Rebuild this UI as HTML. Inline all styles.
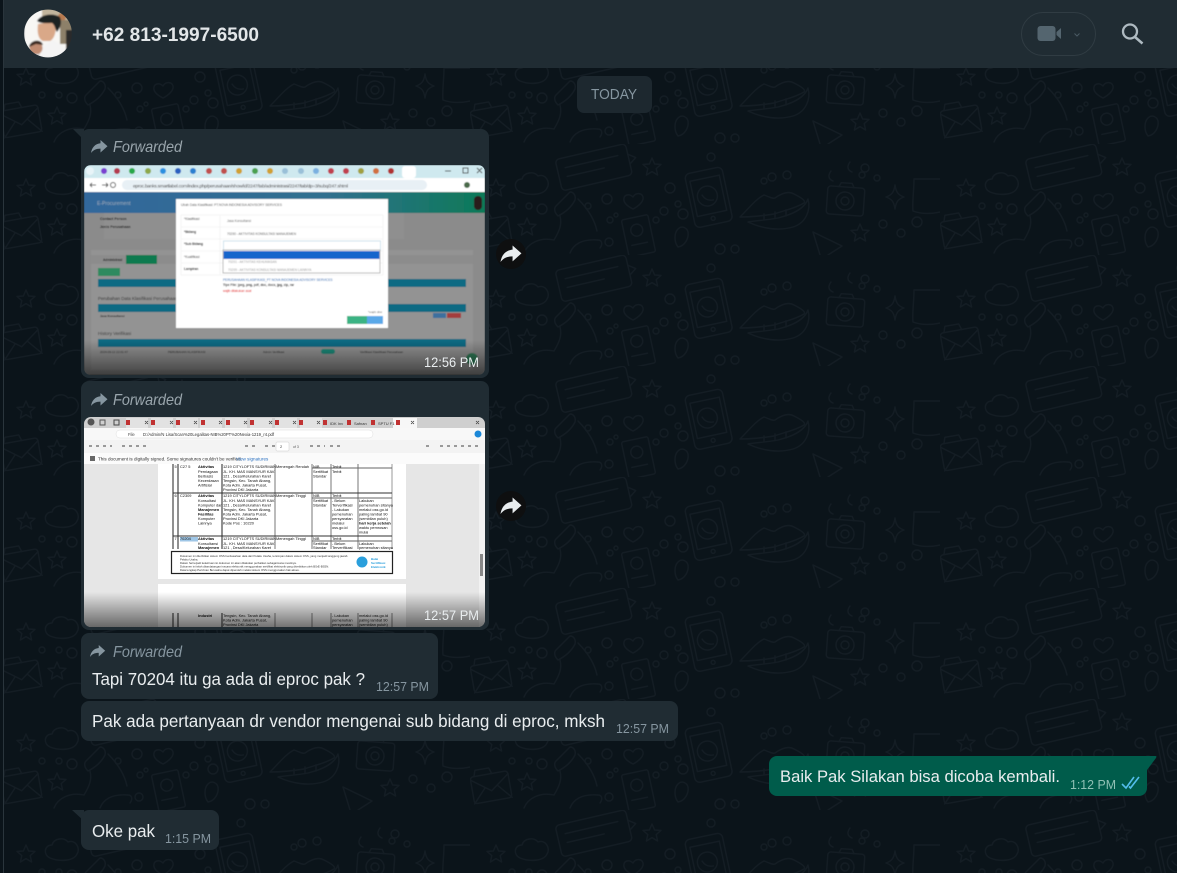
<!DOCTYPE html>
<html><head><meta charset="utf-8"><title>Chat</title>
<style>
html,body{margin:0;padding:0;background:#0b141a;width:1177px;height:873px;overflow:hidden}
svg{display:block;position:absolute;left:0;top:0}
text{font-family:"Liberation Sans",sans-serif}
</style></head><body>
<svg width="1177" height="873" viewBox="0 0 1177 873" xmlns="http://www.w3.org/2000/svg">
<defs>
<path id="star" d="M0-9 2.6-3 9-2.6 4.2 1.6 5.6 8 0 4.6-5.6 8-4.2 1.6-9-2.6-2.6-3Z"/>
<path id="fw" d="M9.500 0 16.500 6.200 9.500 12.500V8.600C5 8.600 2.200 10 0 13 .8 7.500 4 3.800 9.500 3.200Z"/>
<pattern id="doodle" patternUnits="userSpaceOnUse" x="0" y="33" width="470" height="111">
<g fill="none" stroke="#141d24" stroke-width="1.400" stroke-linecap="round" stroke-linejoin="round">
<g transform="rotate(-13 125 24)"><rect x="88" y="7" width="72" height="32" rx="4"/><path d="M96 17H150M96 26H134M160 18l7 5-7 5"/></g>
<use href="#star" x="182" y="23"/>
<path d="M50 48c-7-3-6-13 2-13 2-7 12-8 16-3 7-3 13 6 9 12-3 7-17 8-27 4Z"/>
<g transform="rotate(-12 238 55)"><rect x="220" y="26" width="38" height="55" rx="5"/><rect x="224" y="34" width="30" height="36"/><circle cx="238" cy="52" r="10"/><path d="M233 50c2 5 6 7 10 7"/><circle cx="239" cy="75" r="2"/></g>
<path d="M270 73c10-10 16-18 24-22 6 2 8 4 11 3 7-5 14-7 19-4 8 4 12 7 10 9-10 6-22 8-30 11-12 2-24 3-34 3ZM278 78c4-1 20-2 30-4 12-3 26-8 30-19 3 11-2 24-15 28-14 4-30 2-45-5Z"/>
<path d="M294 70v5M305 68v6M316 66v6"/>
<g transform="rotate(4 375 57)"><rect x="357" y="43" width="37" height="28" rx="3"/><circle cx="375" cy="57" r="9"/><circle cx="375" cy="57" r="4"/><path d="M368 43l2-4h11l2 4"/></g>
<path d="M425 41c1 7 3 10 9 12-6 2-8 5-9 12-1-7-3-10-9-12 6-2 8-5 9-12Z"/>
<path d="M444 35h26M444 35c0 12-2 24-1 32 8 3 18 3 27 1" />
<use href="#star" x="26" y="44"/>
<g transform="rotate(-10 20 88)"><rect x="2" y="75" width="38" height="27" rx="3"/><path d="M2 78 21 92 40 78M2 102 15 88M40 102 28 88"/><path d="M6 75l2-6H22l2 6"/></g>
<path d="M163 65c-6-3-10-7-9-11 1-4 6-4 9-1 3-5 9-4 10 0 1 4-4 9-10 12Z"/>
<path d="M54 109c4-10 16-16 30-13 6-10 8-16 6-24M88 72c-4-4-4-8-2-10l14-14c4 0 6 4 5 8-3 6-9 12-17 16ZM108 55c8 8 16 18 19 32M100 109c4-10 14-14 28-13 4 0 5 4 2 8"/>
<g transform="rotate(-12 168 92)"><rect x="155" y="73" width="27" height="38" rx="2"/><circle cx="168" cy="86" r="6"/><path d="M160 100H176"/></g>
<path d="M208 103c-4-5-4-14 0-18 4-4 9-1 10 3 1 6-3 14-10 15Z"/>
<use href="#star" x="57" y="83"/><use href="#star" x="390" y="89"/>
<path d="M343 88 372 102 358 111M343 88 350 111"/>
<path d="M361 27c-3 4-3 8 2 10M380 18c-3 4-3 8 2 10"/>
<circle cx="213" cy="70" r="5"/><circle cx="200" cy="44" r="5"/><circle cx="250" cy="105" r="5"/><circle cx="265" cy="105" r="4"/><circle cx="137" cy="55" r="5"/><circle cx="72" cy="65" r="5"/><circle cx="118" cy="62" r="3"/><circle cx="42" cy="62" r="3"/><circle cx="59" cy="62" r="3"/><circle cx="194" cy="67" r="4"/><circle cx="186" cy="76" r="3"/><circle cx="208" cy="60" r="3"/><circle cx="302" cy="33" r="4"/><circle cx="317" cy="31" r="4"/><circle cx="294" cy="37" r="3"/><circle cx="413" cy="80" r="4"/><circle cx="447" cy="78" r="5"/><circle cx="431" cy="89" r="4"/><circle cx="407" cy="34" r="3"/><circle cx="392" cy="31" r="3"/><circle cx="140" cy="76" r="3"/><circle cx="146" cy="71" r="2"/><circle cx="139" cy="98" r="4"/><circle cx="395" cy="24" r="4"/><circle cx="241" cy="13" r="4"/>
</g></pattern>
<clipPath id="av"><circle cx="48" cy="33.500" r="24"/></clipPath>
<clipPath id="im1"><rect x="84" y="165" width="401" height="210" rx="7"/></clipPath>
<clipPath id="im2"><rect x="84" y="417" width="401" height="210" rx="7"/></clipPath>
<linearGradient id="shade" x1="0" y1="0" x2="0" y2="1"><stop offset="0" stop-color="#000" stop-opacity="0"/><stop offset="1" stop-color="#000" stop-opacity=".55"/></linearGradient>
<linearGradient id="appbar" x1="0" y1="0" x2="1" y2="0"><stop offset="0" stop-color="#31679c"/><stop offset=".6" stop-color="#31708f"/><stop offset="1" stop-color="#0d7a58"/></linearGradient>
<filter id="b1" x="-5%" y="-5%" width="110%" height="110%"><feGaussianBlur stdDeviation=".6"/></filter>
<filter id="b3" x="-5%" y="-5%" width="110%" height="110%"><feGaussianBlur stdDeviation=".35"/></filter>
<filter id="b2" x="-5%" y="-5%" width="110%" height="110%"><feGaussianBlur stdDeviation=".8"/></filter>
</defs>

<!-- wallpaper -->
<rect width="1177" height="873" fill="#0b141a"/>
<rect width="1177" height="873" fill="url(#doodle)"/>

<!-- header -->
<rect x="4" y="0" width="1173" height="68" fill="#202c33"/>
<rect x="0" y="0" width="3" height="873" fill="#0b141a"/>
<rect x="3" y="0" width="1" height="873" fill="#2a353c"/>
<g clip-path="url(#av)"><g filter="url(#b2)">
<rect x="24" y="9" width="48" height="49" fill="#f8f7f4"/>
<rect x="42" y="9" width="30" height="14" fill="#c2b59d"/>
<circle cx="62" cy="17" r="4" fill="#b87a50"/>
<rect x="60" y="20" width="12" height="24" fill="#8d8069"/>
<rect x="66" y="30" width="6" height="28" fill="#2b2a2a"/>
<path d="M38 24c-1 8 0 15 5 17h7c4-2 6-8 6-15l-4-4Z" fill="#d9a888"/>
<path d="M37 21c3-6 15-9 23-4 2 5 1 10-3 15-2-3-2-7-5-9-5 0-11 1-15-2Z" fill="#1f2024"/>
<path d="M42 47l11-7 10 6 6 12H41Z" fill="#f4f4f4"/>
<circle cx="36" cy="48" r="6.500" fill="#c08c72"/><path d="M29 47c1-7 12-9 14-2l-7-1Z" fill="#3a2c24"/>
<rect x="26" y="54" width="14" height="5" fill="#d8d8d8"/>
</g></g>
<text x="92" y="41" fill="#e2e6e8" font-size="19.500" font-weight="700" textLength="167" lengthAdjust="spacingAndGlyphs">+62 813-1997-6500</text>
<rect x="1021.500" y="12.500" width="74" height="43" rx="21.500" fill="none" stroke="#303c43"/>
<rect x="1037.500" y="26" width="18" height="15" rx="3" fill="#54656f"/>
<path d="M1061 28 1056.500 32V35L1061 39Z" fill="#54656f"/>
<path d="M1074.500 33.500l2.500 2.500 2.500-2.500" fill="none" stroke="#4a5a63" stroke-width="1"/>
<circle cx="1130" cy="31.500" r="7" fill="none" stroke="#aebac1" stroke-width="2.300"/>
<path d="M1135 37l7.500 6.500" stroke="#aebac1" stroke-width="2.500" fill="none"/>

<!-- today -->
<rect x="577" y="76" width="75" height="37" rx="7" fill="#1d282f"/>
<text x="591" y="99" fill="#8696a0" font-size="15" textLength="46" lengthAdjust="spacingAndGlyphs">TODAY</text>

<!-- bubble 1 -->
<path d="M73 129H84V140Z" fill="#202c33"/>
<rect x="81" y="129" width="408" height="249" rx="8" fill="#202c33"/>
<use href="#fw" x="91" y="140" fill="#8696a0"/>
<text x="113" y="152" fill="#9aa6ad" font-size="16" font-style="italic" textLength="69" lengthAdjust="spacingAndGlyphs">Forwarded</text>
<g clip-path="url(#im1)">
<g filter="url(#b1)">
<rect x="84" y="165" width="401" height="210" fill="#8b8b8b"/>
<rect x="84" y="165" width="401" height="13" fill="#cfe9ef"/>
<circle cx="90" cy="171" r="4" fill="#e8f4f8"/>
<g><circle cx="104" cy="171" r="3" fill="#7a3fd0"/><circle cx="117" cy="171" r="3" fill="#b33b50"/><circle cx="132" cy="171" r="3" fill="#28a84a"/><circle cx="148" cy="171" r="3" fill="#8da84a"/><circle cx="163" cy="171" r="3" fill="#2a90e0"/><circle cx="178" cy="171" r="3" fill="#2a60c0"/><circle cx="193" cy="171" r="3" fill="#2a80d0"/><circle cx="209" cy="171" r="3" fill="#c0504d"/><circle cx="224" cy="171" r="3" fill="#c0504d"/><circle cx="239" cy="171" r="3" fill="#d0a030"/><circle cx="255" cy="171" r="3" fill="#4aa050"/><circle cx="270" cy="171" r="3" fill="#d0a030"/><circle cx="285" cy="171" r="3" fill="#9ac0d8"/><circle cx="301" cy="171" r="3" fill="#9ac0d8"/><circle cx="316" cy="171" r="3" fill="#7ab0e0"/><circle cx="331" cy="171" r="3" fill="#c04050"/><circle cx="346" cy="171" r="3" fill="#c04050"/><circle cx="361" cy="171" r="3" fill="#a0a040"/><circle cx="376" cy="171" r="3" fill="#d07040"/><circle cx="391" cy="171" r="3" fill="#b03030"/></g>
<rect x="402" y="166" width="14" height="12" rx="3" fill="#fff"/>
<path d="M445 171H451M463 168h5v5h-5ZM477 168l5 5M482 168l-5 5" stroke="#444" stroke-width="1" fill="none"/>
<rect x="84" y="178" width="401" height="14" fill="#fff"/>
<path d="M90 185H96M90 185l2-2M90 185l2 2M102 185H108M108 185l-2-2M108 185l-2 2" stroke="#555" stroke-width="1" fill="none"/>
<circle cx="113" cy="185" r="2.500" fill="none" stroke="#555"/>
<rect x="122" y="180" width="305" height="10" rx="5" fill="#e8f0f5"/>
<text x="133" y="187.500" font-size="4.800" fill="#444" textLength="215">eproc.banks.smartlabel.com/index.php/perusahaan/show/id/2247/tab/administrasi/2247/tab/dp=3/subq/247.shtml</text>
<circle cx="467" cy="185" r="3" fill="#4a6a4a"/>
<rect x="84" y="192" width="401" height="21" fill="url(#appbar)"/>
<text x="97" y="205" font-size="5" fill="#9ab">E-Procurement</text>
<rect x="474" y="196" width="8" height="14" rx="4" fill="#2a1a1a"/>
<rect x="104" y="213" width="300" height="26" fill="#8f8f8f"/>
<text x="100" y="220" font-size="3.600" font-weight="700" fill="#222">Contact Person</text>
<text x="100" y="228" font-size="3.600" font-weight="700" fill="#222">Jenis Perusahaan</text>
<rect x="91" y="250" width="382" height="120" fill="#939393"/>
<rect x="91" y="255" width="382" height="9" fill="#8c8c8c"/>
<text x="103" y="261" font-size="3.200" font-weight="700" fill="#222">Administrasi</text>
<rect x="126" y="255" width="31" height="9" fill="#0b7a50"/>
<rect x="98" y="268" width="22" height="8" fill="#2f8a5e"/>
<rect x="98" y="279" width="368" height="8" fill="#076b83"/>
<text x="98" y="300" font-size="4.500" fill="#333">Perubahan Data Klasifikasi Perusahaan</text>
<rect x="98" y="304" width="368" height="8" fill="#076b83"/>
<text x="100" y="317" font-size="3" font-weight="700" fill="#222">Jasa Konsultansi</text>
<rect x="433" y="313" width="13" height="5" fill="#3d6f9e"/><rect x="447" y="313" width="14" height="5" fill="#a33e3e"/>
<text x="98" y="335" font-size="4.500" fill="#333">History Verifikasi</text>
<rect x="98" y="339" width="368" height="8" fill="#076b83"/>
<text x="100" y="353" font-size="3" fill="#222">2024-09-12 22:01:47</text>
<text x="168" y="353" font-size="3" fill="#222">PERUBAHAN KLASIFIKASI</text>
<text x="263" y="353" font-size="3" fill="#222">Admin Verifikasi</text>
<rect x="321" y="349" width="14" height="5" rx="2.500" fill="#1a8a7a"/>
<text x="360" y="353" font-size="3" fill="#222">Verifikasi Klasifikasi Perusahaan</text>
<circle cx="472" cy="359" r="6" fill="#2f7a56"/>
<!-- modal -->
<rect x="176" y="199" width="212" height="129" fill="#fff"/>
<text x="181" y="206" font-size="3.300" fill="#555">Ubah Data Klasifikasi: PT.NOVA INDONESIA ADVISORY SERVICES</text>
<rect x="181" y="215" width="202" height="60" fill="none" stroke="#eee" stroke-width=".6"/>
<path d="M181 227H383M181 239H383M181 251H383M181 263H383M220 215V275" stroke="#eee" stroke-width=".6"/>
<text x="184" y="220" font-size="3.200" fill="#444">*Klasifikasi</text><text x="184" y="233" font-size="3.200" font-weight="700" fill="#222">*Bidang</text><text x="184" y="245" font-size="3.200" font-weight="700" fill="#222">*Sub Bidang</text><text x="184" y="258" font-size="3.200" fill="#444">*Kualifikasi</text><text x="184" y="270" font-size="3.200" font-weight="700" fill="#222">Lampiran</text>
<text x="227" y="222" font-size="3.200" fill="#666">Jasa Konsultansi</text>
<text x="227" y="235" font-size="3.200" fill="#555">70200 - AKTIVITAS KONSULTASI MANAJEMEN</text>
<rect x="223.500" y="241" width="157" height="9" fill="#fff" stroke="#bcd8e6" stroke-width=".7"/>
<rect x="223" y="250" width="157" height="23" fill="#fff" stroke="#aaa" stroke-width=".8"/>
<rect x="223.500" y="251" width="156" height="8" fill="#1565cc"/>
<text x="228" y="263" font-size="3.200" fill="#999">70201 - AKTIVITAS KEHUMASAN</text>
<text x="228" y="271" font-size="3.200" fill="#999">70209 - AKTIVITAS KONSULTASI MANAJEMEN LAINNYA</text>
<text x="223" y="281" font-size="3.200" fill="#2a68b0">PERUSAHAAN KLASIFIKASI_PT NOVA INDONESIA ADVISORY SERVICES</text>
<text x="223" y="286" font-size="3.200" font-weight="700" fill="#222">Tipe File: jpeg, png, pdf, doc, docx, jpg, zip, rar</text>
<text x="223" y="292" font-size="3.200" fill="#e02020">wajib dilakukan asal</text>
<text x="368" y="313" font-size="3" fill="#666">*wajib diisi</text>
<rect x="347" y="316" width="20" height="8" fill="#3bb384"/><rect x="367" y="316" width="16" height="8" fill="#5aa8e8"/>
</g>
<rect x="84" y="340" width="401" height="35" fill="url(#shade)"/>
</g>
<text x="424" y="367" fill="#e9edef" font-size="13.500" textLength="55" lengthAdjust="spacingAndGlyphs">12:56 PM</text>
<circle cx="511" cy="254" r="15" fill="#0e0f10"/>
<use href="#fw" transform="translate(500.500 245.500) scale(1.270)" fill="#e9edef"/>

<!-- bubble 2 -->
<rect x="81" y="381" width="408" height="249" rx="8" fill="#202c33"/>
<use href="#fw" x="91" y="393" fill="#8696a0"/>
<text x="113" y="405" fill="#9aa6ad" font-size="16" font-style="italic" textLength="69" lengthAdjust="spacingAndGlyphs">Forwarded</text>
<g clip-path="url(#im2)">
<g filter="url(#b3)">
<rect x="84" y="417" width="401" height="210" fill="#e6e6e6"/>
<rect x="84" y="417" width="401" height="11" fill="#cfcfcf"/>
<circle cx="91" cy="422" r="3.500" fill="#555"/>
<rect x="100" y="420" width="5" height="5" fill="none" stroke="#555"/><rect x="114" y="420" width="5" height="5" fill="none" stroke="#444"/>
<g fill="#e2e2e2"><rect x="126" y="418" width="22" height="10"/><rect x="151" y="418" width="22" height="10"/><rect x="176" y="418" width="22" height="10"/><rect x="200" y="418" width="22" height="10"/><rect x="225" y="418" width="22" height="10"/><rect x="250" y="418" width="22" height="10"/><rect x="275" y="418" width="22" height="10"/><rect x="300" y="418" width="22" height="10"/></g>
<rect x="393" y="418" width="24" height="10" fill="#f7f7f7"/>
<g fill="#c03030"><rect x="126" y="420" width="4" height="5"/><rect x="151" y="420" width="4" height="5"/><rect x="176" y="420" width="4" height="5"/><rect x="201" y="420" width="4" height="5"/><rect x="226" y="420" width="4" height="5"/><rect x="250" y="420" width="4" height="5"/><rect x="275" y="420" width="4" height="5"/><rect x="299" y="420" width="4" height="5"/><rect x="323" y="420" width="4" height="5"/><rect x="347" y="420" width="4" height="5"/><rect x="371" y="420" width="4" height="5"/><rect x="396" y="420" width="4" height="5"/></g>
<path d="M145 421l3 3M148 421l-3 3M170 421l3 3M173 421l-3 3M194 421l3 3M197 421l-3 3M219 421l3 3M222 421l-3 3M244 421l3 3M247 421l-3 3M269 421l3 3M272 421l-3 3M293 421l3 3M296 421l-3 3M317 421l3 3M320 421l-3 3M411 421l3 3M414 421l-3 3M476 421l3 3M479 421l-3 3" stroke="#333" stroke-width=".7"/>
<text x="330" y="425" font-size="4" fill="#333">IDK Inv</text><text x="354" y="425" font-size="4" fill="#333">Safnan</text><text x="378" y="425" font-size="4" fill="#333">SPTU F1</text>
<rect x="84" y="428" width="401" height="12" fill="#f8f8f8"/>
<rect x="116" y="430" width="257" height="8" rx="4" fill="#fff" stroke="#ddd" stroke-width=".5"/>
<text x="128" y="436" font-size="4.200" fill="#444">File</text>
<text x="143" y="436" font-size="4.200" fill="#333">D:/Admin/N Lisa/Scan%20Legalitas-NIB%20PT%20Nexia-1219_r4.pdf</text>
<circle cx="478" cy="434" r="3.500" fill="#1e88d8"/>
<rect x="84" y="440" width="401" height="13" fill="#f3f3f3"/>
<rect x="276" y="442" width="13" height="9" rx="1" fill="#fff" stroke="#ccc" stroke-width=".5"/>
<text x="280" y="448" font-size="4" fill="#444">2</text>
<text x="293" y="448" font-size="3.500" fill="#555">of 3</text>
<path d="M89 446H112M122 446H150M245 446H255M265 446H275M310 446H325M330 446H340M426 446H432M440 446H478" stroke="#999" stroke-width="2" stroke-dasharray="3 4"/>
<rect x="84" y="453" width="401" height="11" fill="#fbfbfb"/>
<rect x="90" y="456" width="5" height="5" fill="#666"/>
<text x="98" y="460.500" font-size="4.600" fill="#333">This document is digitally signed. Some signatures couldn't be verified.</text>
<text x="236" y="460.500" font-size="4.600" fill="#2a70c0">View signatures</text>
<rect x="158" y="464" width="248" height="115" fill="#fff"/>
<rect x="158" y="584" width="248" height="43" fill="#fff"/>
<rect x="479" y="464" width="6" height="163" fill="#f2f2f2"/><rect x="480" y="554" width="3" height="22" fill="#888"/>
<g stroke="#222" stroke-width="1" fill="none">
<path d="M173 464V549M178 464V549M222 464V549"/>
<path d="M275 464V549M312 464V549" stroke="#777"/>
<path d="M331 464V549M358 464V549" stroke="#777"/>
<path d="M392 464V549" stroke="#999"/>
<path d="M173 493H392M173 536H392" stroke="#333"/>
<path d="M312 468H392M312 498H392M312 541H392" stroke="#666"/>
<rect x="171.500" y="551.500" width="221" height="22" stroke-width="1.200"/>
</g>
<rect x="180" y="537" width="18" height="4.500" fill="#9fc6e6"/>
<g font-size="3.900" fill="#111">
<text x="174.500" y="468">5</text><text x="180" y="468">C27 5</text>
<text x="198" y="468" font-weight="700">Aktivitas</text><text x="198" y="473">Perniagaan</text><text x="198" y="477.500">Berbasis</text><text x="198" y="482">Kecerdasan</text><text x="198" y="486.500">Artifisial</text>
<text x="223" y="468">1219 CITYLOFTS SUDIRMAN</text><text x="223" y="473">JL. KH. MAS MANSYUR KAV.</text><text x="223" y="477.500">121 , Desa/Kelurahan Karet</text><text x="223" y="482">Tengsin, Kec. Tanah Abang,</text><text x="223" y="486.500">Kota Adm. Jakarta Pusat,</text><text x="223" y="491">Provinsi DKI Jakarta</text>
<text x="276" y="468">Menengah Rendah</text><text x="313" y="468">NIB</text><text x="313" y="473">Sertifikat</text><text x="313" y="477.500">Standar</text><text x="332" y="468">Terbit</text><text x="332" y="473">Terbit</text>
<text x="174.500" y="497">6</text><text x="180" y="497">C2309</text>
<text x="198" y="497" font-weight="700">Aktivitas</text><text x="198" y="502">Konsultasi</text><text x="198" y="506.500">Komputer dan</text><text x="198" y="511" font-weight="700">Manajemen</text><text x="198" y="515.500" font-weight="700">Fasilitas</text><text x="198" y="520">Komputer</text><text x="198" y="524.500">Lainnya</text>
<text x="223" y="497">1219 CITYLOFTS SUDIRMAN</text><text x="223" y="502">JL. KH. MAS MANSYUR KAV.</text><text x="223" y="506.500">121 , Desa/Kelurahan Karet</text><text x="223" y="511">Tengsin, Kec. Tanah Abang,</text><text x="223" y="515.500">Kota Adm. Jakarta Pusat,</text><text x="223" y="520">Provinsi DKI Jakarta</text><text x="223" y="524.500">Kode Pos : 10220</text>
<text x="276" y="497">Menengah Tinggi</text><text x="313" y="497">NIB</text><text x="313" y="502">Sertifikat</text><text x="313" y="506.500">Standar</text>
<text x="332" y="497">Terbit</text><text x="332" y="502">- Belum</text><text x="332" y="506.500">Terverifikasi</text><text x="332" y="511">- Lakukan</text><text x="332" y="515.500">pemenuhan</text><text x="332" y="520">persyaratan</text><text x="332" y="524.500">melalui</text><text x="332" y="529">oss.go.id</text>
<text x="359" y="502">Lakukan</text><text x="359" y="506.500">pemenuhan sitanya</text><text x="359" y="511">melalui oss.go.id</text><text x="359" y="515.500">paling lambat 90</text><text x="359" y="520">(sembilan puluh)</text><text x="359" y="524.500" font-weight="700">hari kerja setelah</text><text x="359" y="529">waktu pemrosan</text><text x="359" y="533.500">mulai</text>
<text x="174.500" y="540">7</text><text x="180" y="540">70204</text>
<text x="198" y="540" font-weight="700">Aktivitas</text><text x="198" y="545">Konsultansi</text><text x="198" y="549" font-weight="700">Manajemen</text>
<text x="223" y="540">1219 CITYLOFTS SUDIRMAN</text><text x="223" y="545">JL. KH. MAS MANSYUR KAV.</text><text x="223" y="549">121 , Desa/Kelurahan Karet</text>
<text x="276" y="540">Menengah Tinggi</text><text x="313" y="540">NIB</text><text x="313" y="545">Sertifikat</text><text x="313" y="549">Standar</text><text x="332" y="540">Terbit</text><text x="332" y="545">- Belum</text><text x="332" y="549">Terverifikasi</text><text x="359" y="545">Lakukan</text><text x="359" y="549">pemenuhan sitanya</text>
</g>
<g font-size="2.800" fill="#333">
<text x="180" y="557">Dokumen ini diterbitkan sistem OSS berdasarkan data dari Pelaku Usaha, tersimpan dalam sistem OSS, yang menjadi tanggung jawab</text>
<text x="180" y="560.500">Pelaku Usaha.</text>
<text x="180" y="564">Dalam hal terjadi kekeliruan isi dokumen ini akan dilakukan perbaikan sebagaimana mestinya.</text>
<text x="180" y="567.500">Dokumen ini telah ditandatangani secara elektronik menggunakan sertifikat elektronik yang diterbitkan oleh BSrE-BSSN.</text>
<text x="180" y="571">Data lengkap Perizinan Berusaha dapat diperoleh melalui sistem OSS menggunakan hak akses.</text>
</g>
<circle cx="362" cy="562" r="5.500" fill="#2a9fdc"/>
<text x="371" y="560" font-size="3" font-weight="700" fill="#2a9fdc">Balai</text><text x="371" y="564" font-size="3" font-weight="700" fill="#2a9fdc">Sertifikasi</text><text x="371" y="568" font-size="3" font-weight="700" fill="#2a9fdc">Elektronik</text>
<g stroke="#222" stroke-width="1"><path d="M173 613V627M178 613V627M222 613V627"/><path d="M275 613V627M312 613V627M331 613V627M358 613V627M392 613V627" stroke="#888"/></g>
<g font-size="3.900" fill="#111"><text x="198" y="617" font-weight="700">Industri</text><text x="223" y="617">Tengsin, Kec. Tanah Abang,</text><text x="223" y="621.500">Kota Adm. Jakarta Pusat,</text><text x="223" y="626">Provinsi DKI Jakarta</text><text x="332" y="617">- Lakukan</text><text x="332" y="621.500">pemenuhan</text><text x="332" y="626">persyaratan</text><text x="359" y="617">melalui oss.go.id</text><text x="359" y="621.500">paling lambat 90</text><text x="359" y="626">(sembilan puluh)</text></g>
</g>
<rect x="84" y="592" width="401" height="35" fill="url(#shade)"/>
</g>
<text x="424" y="620" fill="#e9edef" font-size="13.500" textLength="55" lengthAdjust="spacingAndGlyphs">12:57 PM</text>
<circle cx="511" cy="506" r="15" fill="#0e0f10"/>
<use href="#fw" transform="translate(500.500 497.500) scale(1.270)" fill="#e9edef"/>

<!-- bubble 3 -->
<rect x="81" y="633" width="357" height="66" rx="8" fill="#202c33"/>
<use href="#fw" transform="translate(90 645) scale(.92)" fill="#8696a0"/>
<text x="113" y="657" fill="#8696a0" font-size="16" font-style="italic" textLength="69" lengthAdjust="spacingAndGlyphs">Forwarded</text>
<text x="92" y="685" fill="#e9edef" font-size="17.500" textLength="273" lengthAdjust="spacingAndGlyphs">Tapi 70204 itu ga ada di eproc pak ?</text>
<text x="376" y="691" fill="#8696a0" font-size="13" textLength="53" lengthAdjust="spacingAndGlyphs">12:57 PM</text>

<!-- bubble 4 -->
<rect x="81" y="701" width="597" height="40" rx="8" fill="#202c33"/>
<text x="92" y="727" fill="#e9edef" font-size="17.500" textLength="513" lengthAdjust="spacingAndGlyphs">Pak ada pertanyaan dr vendor mengenai sub bidang di eproc, mksh</text>
<text x="616" y="733" fill="#8696a0" font-size="13" textLength="53" lengthAdjust="spacingAndGlyphs">12:57 PM</text>

<!-- outgoing -->
<path d="M1140 756H1155.500Q1157 756 1156 758L1147 770Z" fill="#005c4b"/>
<path d="M769 764a8 8 0 0 1 8-8H1147V788a8 8 0 0 1-8 8H777a8 8 0 0 1-8-8Z" fill="#005c4b"/>
<text x="780" y="782" fill="#e9edef" font-size="17" textLength="280" lengthAdjust="spacingAndGlyphs">Baik Pak Silakan bisa dicoba kembali.</text>
<text x="1070" y="789" fill="#8fc0b4" font-size="13" textLength="46" lengthAdjust="spacingAndGlyphs">1:12 PM</text>
<path d="M1122 784 1126 788 1134 777M1129 786.500 1130.500 788 1139 777" fill="none" stroke="#53bdeb" stroke-width="1.600"/>

<!-- bubble 5 -->
<path d="M72 810H84V821Z" fill="#202c33"/>
<rect x="81" y="810" width="138" height="40" rx="8" fill="#202c33"/>
<text x="92" y="837" fill="#e9edef" font-size="17.500" textLength="63" lengthAdjust="spacingAndGlyphs">Oke pak</text>
<text x="165" y="843" fill="#8696a0" font-size="13" textLength="46" lengthAdjust="spacingAndGlyphs">1:15 PM</text>
</svg>
</body></html>
